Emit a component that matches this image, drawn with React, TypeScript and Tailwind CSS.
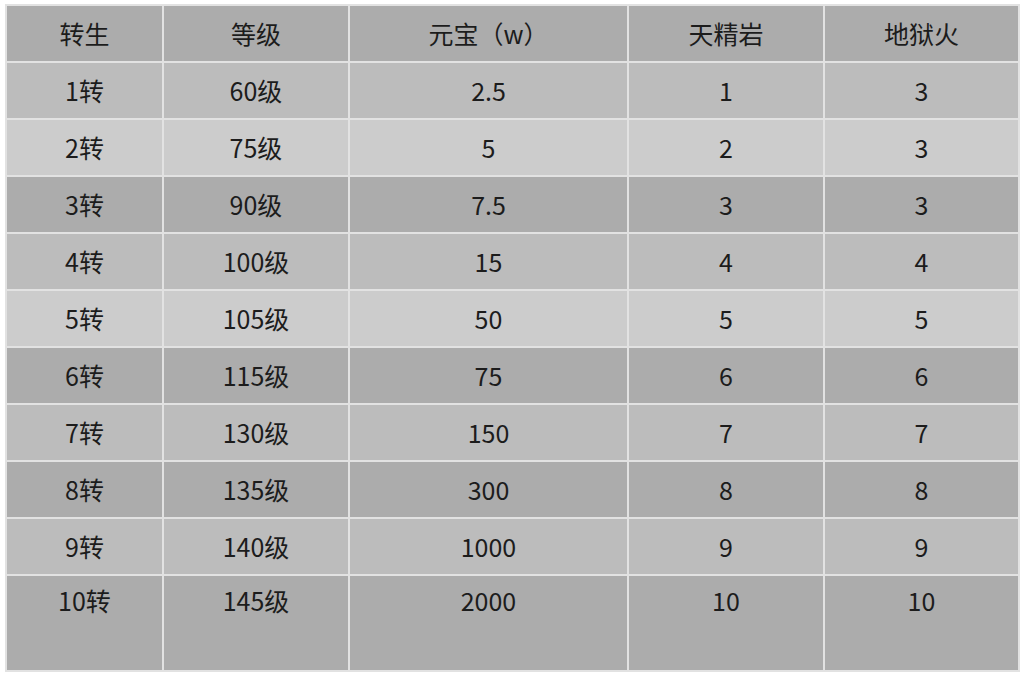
import React from "react";

const rows: [string, string, string, string, string][] = [
  ["1转", "60级", "2.5", "1", "3"],
  ["2转", "75级", "5", "2", "3"],
  ["3转", "90级", "7.5", "3", "3"],
  ["4转", "100级", "15", "4", "4"],
  ["5转", "105级", "50", "5", "5"],
  ["6转", "115级", "75", "6", "6"],
  ["7转", "130级", "150", "7", "7"],
  ["8转", "135级", "300", "8", "8"],
  ["9转", "140级", "1000", "9", "9"],
  ["10转", "145级", "2000", "10", "10"],
];

const bgs = [
  "bg-[#bcbcbc]",
  "bg-[#cccccc]",
  "bg-[#acacac]",
  "bg-[#bcbcbc]",
  "bg-[#cccccc]",
  "bg-[#acacac]",
  "bg-[#bcbcbc]",
  "bg-[#acacac]",
  "bg-[#bcbcbc]",
  "bg-[#acacac]",
];

export default function App() {
  return (
    <div
      className="w-[1023px] h-[675px] bg-white pt-[4px] pl-[5px]"
      style={{ fontFamily: '"Noto Sans CJK SC", "Noto Sans", sans-serif' }}
    >
      <table className="table-fixed border-collapse w-[1013px] text-[25px] text-[#1c1c1c]">
        <colgroup>
          <col className="w-[157px]" />
          <col className="w-[186px]" />
          <col className="w-[279px]" />
          <col className="w-[196px]" />
          <col className="w-[195px]" />
        </colgroup>
        <thead>
          <tr className="bg-[#acacac] h-[57px]">
            {["转生", "等级", "元宝（w）", "天精岩", "地狱火"].map((h) => (
              <th
                key={h}
                className="border-2 border-[#e2e2e2] font-normal text-center align-middle p-0"
              >
                {h}
              </th>
            ))}
          </tr>
        </thead>
        <tbody>
          {rows.map((r, i) => {
            const last = i === rows.length - 1;
            return (
              <tr key={i} className={`${bgs[i]} ${last ? "h-[96px]" : "h-[57px]"}`}>
                {r.map((c, j) => (
                  <td
                    key={j}
                    className={`border-2 border-[#e2e2e2] text-center p-0 ${
                      last ? "align-top pt-[6px]" : "align-middle"
                    }`}
                  >
                    {c}
                  </td>
                ))}
              </tr>
            );
          })}
        </tbody>
      </table>
    </div>
  );
}
